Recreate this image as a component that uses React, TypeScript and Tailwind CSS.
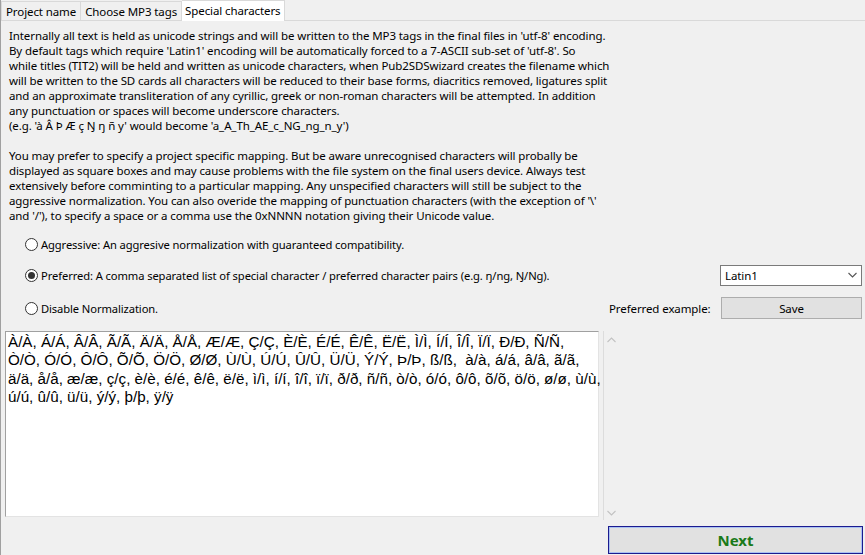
const para1 = [
  "Internally all text is held as unicode strings and will be written to the MP3 tags in the final files in 'utf-8' encoding.",
  "By default tags which require 'Latin1' encoding will be automatically forced to a 7-ASCII sub-set of 'utf-8'. So",
  "while titles (TIT2) will be held and written as unicode characters, when Pub2SDSwizard creates the filename which",
  "will be written to the SD cards all characters will be reduced to their base forms, diacritics removed, ligatures split",
  "and an approximate transliteration of any cyrillic, greek or non-roman characters will be attempted. In addition",
  "any punctuation or spaces will become underscore characters.",
  "(e.g. 'à Â Þ Æ ç Ŋ ŋ ñ y' would become 'a_A_Th_AE_c_NG_ng_n_y')",
];

const para2 = [
  "You may prefer to specify a project specific mapping. But be aware unrecognised characters will probally be",
  "displayed as square boxes and may cause problems with the file system on the final users device. Always test",
  "extensively before comminting to a particular mapping. Any unspecified characters will still be subject to the",
  "aggressive normalization. You can also overide the mapping of punctuation characters (with the exception of '\\'",
  "and '/'), to specify a space or a comma use the 0xNNNN notation giving their Unicode value.",
];

const mapping = [
  "À/À, Á/Á, Â/Â, Ã/Ã, Ä/Ä, Å/Å, Æ/Æ, Ç/Ç, È/È, É/É, Ê/Ê, Ë/Ë, Ì/Ì, Í/Í, Î/Î, Ï/Ï, Ð/Ð, Ñ/Ñ,",
  "Ò/Ò, Ó/Ó, Ô/Ô, Õ/Õ, Ö/Ö, Ø/Ø, Ù/Ù, Ú/Ú, Û/Û, Ü/Ü, Ý/Ý, Þ/Þ, ß/ß,  à/à, á/á, â/â, ã/ã,",
  "ä/ä, å/å, æ/æ, ç/ç, è/è, é/é, ê/ê, ë/ë, ì/ì, í/í, î/î, ï/ï, ð/ð, ñ/ñ, ò/ò, ó/ó, ô/ô, õ/õ, ö/ö, ø/ø, ù/ù,",
  "ú/ú, û/û, ü/ü, ý/ý, þ/þ, ÿ/ÿ",
];

function Radio({ checked, label }: { checked?: boolean; label: string }) {
  return (
    <label className="flex items-center gap-[3px] pl-[24px]">
      <span className="w-[13px] h-[13px] rounded-full border border-[#333] bg-white flex items-center justify-center">
        {checked && <span className="w-[7px] h-[7px] rounded-full bg-[#333]" />}
      </span>
      <span className="text-[11.2px]">{label}</span>
    </label>
  );
}

function Chevron({ up, className }: { up?: boolean; className?: string }) {
  return (
    <svg width="9" height="6" viewBox="0 0 9 6" className={className}>
      <path
        d={up ? "M0.5 5 L4.5 1 L8.5 5" : "M0.5 1 L4.5 5 L8.5 1"}
        fill="none"
        stroke="currentColor"
        strokeWidth="1.1"
      />
    </svg>
  );
}

export default function App() {
  return (
    <div className="w-[865px] h-[555px] bg-[#f0f0f0] overflow-hidden flex flex-col text-[11.5px] tracking-[-0.1px] leading-[15px] text-black font-['Noto_Sans',sans-serif] border-l border-[#a0a0a0]">
      {/* Tabs */}
      <div className="flex items-end h-[21px] border-b border-[#d9d9d9] shrink-0">
        <div className="h-[19px] px-[4px] flex items-center border border-b-0 border-[#d9d9d9] bg-[#f0f0f0]">
          Project name
        </div>
        <div className="h-[19px] px-[4px] flex items-center border border-b-0 border-l-0 border-[#d9d9d9] bg-[#f0f0f0]">
          Choose MP3 tags
        </div>
        <div className="h-[21px] -mb-px px-[3px] flex items-start pt-[2px] border border-b-0 border-l-0 border-[#d9d9d9] bg-white">
          Special characters
        </div>
      </div>

      {/* Description */}
      <div className="pl-[8px] pt-[7px] whitespace-nowrap">
        {para1.map((l) => (
          <div key={l}>{l}</div>
        ))}
        <div className="h-[15px]" />
        {para2.map((l) => (
          <div key={l}>{l}</div>
        ))}
      </div>

      {/* Options */}
      <div className="flex items-center h-[22px] mt-[10px]">
        <Radio label="Aggressive: An aggresive normalization with guaranteed compatibility." />
      </div>
      <div className="flex items-center h-[22px] mt-[9px]">
        <Radio checked label="Preferred: A comma separated list of special character / preferred character pairs (e.g. ŋ/ng, Ŋ/Ng)." />
        <div className="ml-auto mr-[3px] w-[142px] h-[21px] bg-white border border-[#7a7a7a] flex items-center pl-[4px] pr-[4px]">
          <span className="flex-1">Latin1</span>
          <Chevron className="text-[#555]" />
        </div>
      </div>
      <div className="flex items-center h-[22px] mt-[11px]">
        <Radio label="Disable Normalization." />
        <span className="ml-auto w-[112px]">Preferred example:</span>
        <button className="mr-[3px] w-[141px] h-[22px] bg-[#e1e1e1] border border-[#adadad]">
          Save
        </button>
      </div>

      {/* Mapping area */}
      <div className="flex mt-[12px] h-[189px]">
        <div className="ml-[4px] w-[594px] h-[186px] bg-white border border-[#a0a0a0] border-r-[#e3e3e3] border-b-[#e3e3e3] pl-[2px] pt-[1px] font-['Liberation_Sans',Arial,sans-serif] text-[15.2px] tracking-normal leading-[18.3px] whitespace-pre">
          {mapping.map((l) => (
            <div key={l}>{l}</div>
          ))}
        </div>
        <div className="ml-[4px] w-[16px] border-l border-[#dcdcdc] flex flex-col items-center justify-between pt-[6px] pb-[4px] text-[#c2c2c2]">
          <Chevron up />
          <Chevron />
        </div>
      </div>

      {/* Footer */}
      <div className="flex justify-end mt-[6px] pr-[2px]">
        <button className="w-[255px] h-[28px] bg-[#e1e1e1] border border-[#1b1b8f] shadow-[inset_0_0_0_1px_#a9c1f2] text-[#1a7a1a] font-bold text-[15px] tracking-normal">
          Next
        </button>
      </div>
    </div>
  );
}
